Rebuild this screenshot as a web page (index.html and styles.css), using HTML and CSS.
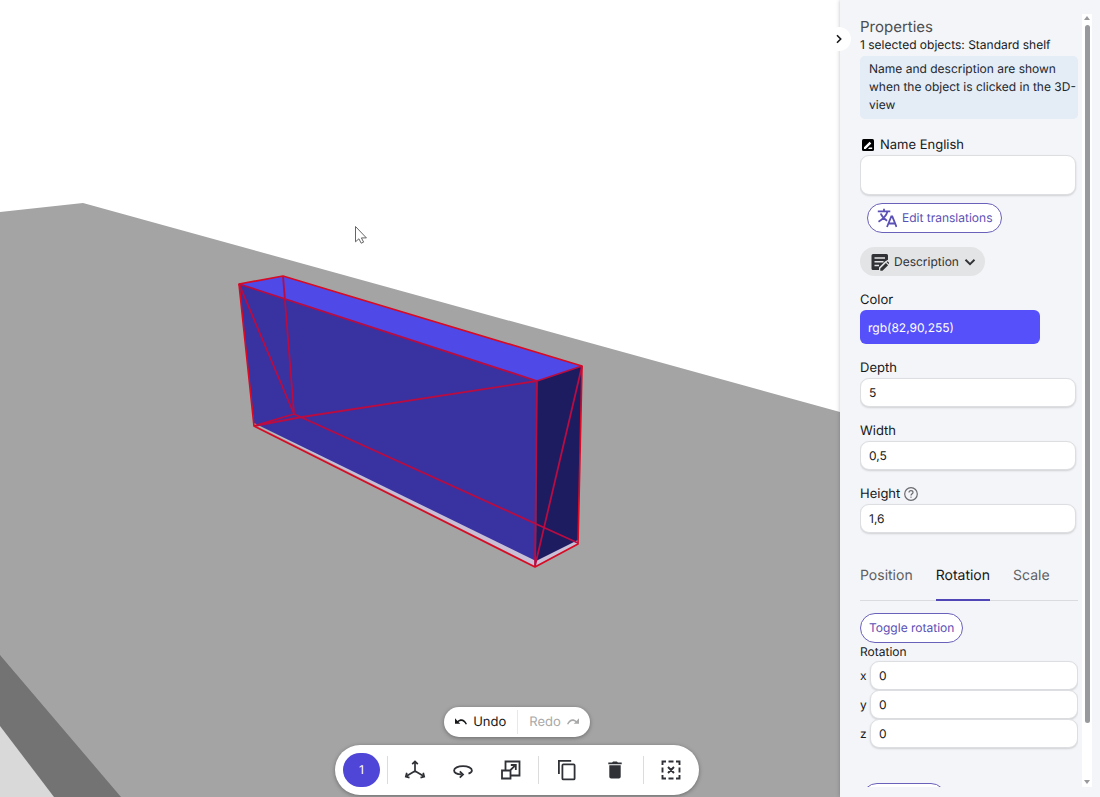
FILE: index.html
```html
<!DOCTYPE html>
<html lang="en">
<head>
<meta charset="utf-8">
<title>Shelf editor</title>
<meta name="viewport" content="width=device-width, initial-scale=1">
<link rel="stylesheet" href="styles.css">
</head>
<body>
<div class="app">
  <main class="viewport">
    <svg class="scene" viewBox="0 0 840 797" preserveAspectRatio="xMidYMid slice" role="img" aria-label="Selected shelf in the 3D view">
      <polygon fill="#d9d9d9" points="0,725 55,797 0,797"/>
      <polygon fill="#737373" points="0,654 122,797 54,797 0,726"/>
      <polygon fill="#a4a4a4" points="0,212 83,203 840,412 840,797 121,797 0,655"/>
      <polygon fill="#c9bfd6" points="254,424 535,566 579,543 579,536 535,556"/>
      <polygon fill="#3833a1" points="239,284 537,381 536,561 254,423"/>
      <polygon fill="#1d1c60" points="537,381 582,366 578,540 536,561"/>
      <polygon fill="#4f49e7" points="239,284 283,276 582,366 537,381"/>
      <g fill="none" stroke="#b80c42" stroke-width="1.800" stroke-linejoin="round">
        <path d="M283 276 294 414 578 543M254 426 294 414M239 284 294 414M254 426 302 417 537 381M582 366 535 566M239 284 537 381 582 366M537 381 535 567"/>
      </g>
      <g fill="none" stroke="#d80a24" stroke-width="1.700" stroke-linejoin="round">
        <path d="M239 284 283 276 582 366 578 544 535 567 254 426Z"/>
      </g>
      <path d="M355.500 226.500v15.300l3.400-3 2.300 4.400 2.400-1.100-2.200-4.200h5z" fill="#fff" stroke="#555" stroke-width=".9"/>
    </svg>

    <div class="dock">
      <div class="history">
        <button class="history-btn" type="button">
          <svg width="12" height="12" viewBox="0 0 12 12"><path d="M0 2.300v5.400h5.300L3.500 6C6 4 9 4.800 10.700 8.500l1.300-.6C10 3 5.800 1.900 2.500 4.900z" fill="currentColor"/></svg>
          Undo
        </button>
        <button class="history-btn" type="button" disabled>
          Redo
          <svg width="12" height="12" viewBox="0 0 12 12"><path d="M12 2.300v5.400H6.700L8.500 6C6 4 3 4.800 1.300 8.500L0 7.900C2 3 6.200 1.900 9.500 4.900z" fill="currentColor"/></svg>
        </button>
      </div>

      <div class="toolbar">
        <button class="count" type="button" aria-label="1 selected object">1</button>
        <div class="tools">
          <button class="tool" type="button" aria-label="Move"><svg width="22" height="22" viewBox="0 0 22 22" fill="none" stroke="currentColor" stroke-width="1.700"><path d="M11 3v9L3 16.800M11 12l8 4.800M8.200 5.200 11 2.400l2.800 2.800M5.500 18.600l-3.700-1 1-3.800M16.500 18.600l3.700-1-1-3.800"/></svg></button>
          <button class="tool" type="button" aria-label="Rotate"><svg width="22" height="22" viewBox="0 0 22 22" fill="none" stroke="currentColor" stroke-width="1.800"><path d="M16.500 14.600c2-.7 3.400-1.800 3.400-3.200 0-2.400-3.800-4.300-8.900-4.300s-8.900 1.900-8.900 4.300c0 2.200 3.100 3.700 7.600 4"/><path d="M7.800 12.400 11 15.500l-3.200 3.200"/></svg></button>
          <button class="tool" type="button" aria-label="Scale"><svg width="22" height="22" viewBox="0 0 22 22" fill="none" stroke="currentColor" stroke-width="1.800"><path d="M5.500 11V2.500h14V16.500H11M2 11.500h8.500v8H2zM9.500 12l6-5.800M10.800 6h5v5"/></svg></button>
        </div>
        <div class="tools middle">
          <button class="tool" type="button" aria-label="Duplicate"><svg width="22" height="22" viewBox="0 0 22 22" fill="none" stroke="currentColor" stroke-width="1.800"><path d="M2.900 15V1.900h12.300"/><rect x="6.400" y="5.400" width="12.200" height="15" rx="1"/></svg></button>
          <button class="tool" type="button" aria-label="Delete"><svg width="22" height="22" viewBox="0 0 22 22" fill="currentColor"><path d="M5.300 6.300h11.400v11.500a1.800 1.800 0 0 1-1.800 1.800H7.100a1.800 1.800 0 0 1-1.800-1.800zM4.300 3.400h3.800l1-1h3.800l1 1h3.800v1.800H4.300z"/></svg></button>
        </div>
        <div class="tools">
          <button class="tool" type="button" aria-label="Clear selection"><svg width="22" height="22" viewBox="0 0 22 22" fill="none" stroke="currentColor" stroke-width="1.900"><path d="M2.500 6V2.500H6M8.500 2.500h5M16 2.500h3.500V6M19.500 8.500v5M19.500 16v3.500H16M13.500 19.500h-5M6 19.500H2.500V16M2.500 13.500v-5M8 8l6 6M14 8l-6 6"/></svg></button>
        </div>
      </div>
    </div>
  </main>

  <aside class="panel">
    <button class="collapse" type="button" aria-label="Collapse panel"><svg width="10" height="10" viewBox="0 0 10 10"><path d="m3 1.300 3.700 3.700L3 8.700" fill="none" stroke="currentColor" stroke-width="1.600"/></svg></button>
    <div class="panel-scroll">
      <h1 class="title">Properties</h1>
      <p class="selected">1 selected objects: Standard shelf</p>
      <p class="info">Name and description are shown when the object is clicked in the 3D-<wbr>view</p>

      <div class="field name-field">
        <label class="label" for="name">
          <svg width="16" height="16" viewBox="0 0 16 16"><rect x="2" y="2" width="12" height="12" rx="1.500"/><path d="M4 12v-1.700L9.600 4.700l1.700 1.700L5.700 12zM12 4.600l-1.700-1.200M8 12h4.200v-1.400H9.400z" fill="#fff"/></svg>
          Name English
        </label>
        <input class="input tall" id="name" type="text">
      </div>
      <button class="outline translate" type="button">
        <svg width="20" height="20" viewBox="0 0 20 20" fill="none" stroke="currentColor" stroke-width="1.800"><path d="M.8 3.300h12.500M7 .8v2.500M10.500 3.500C9.400 7.600 6 11 1.500 13.800M3.700 5.500c1.300 3.200 3.500 5.600 6.400 7.200M10 19l4.300-10.500h1L19.500 19M11.500 15.500h6.500"/></svg>
        Edit translations
      </button>
      <button class="chip" type="button">
        <svg width="18" height="18" viewBox="0 0 18 18"><path d="M2 1h13.500a1.500 1.500 0 0 1 1.500 1.500v4.200L14 8.500 8 14.500V17H2a1.500 1.500 0 0 1-1.500-1.500v-13A1.500 1.500 0 0 1 2 1z" fill="currentColor"/><path d="M3.500 5h10.500M3.500 8.700h9M3.500 12.500h4.500" stroke="#e3e4e5" stroke-width="1.500"/><path d="M9.300 17.800v-2.200l5.600-5.600 2.200 2.200-5.600 5.600zM15.600 9.300l1-1 1.400 1.400v1.500z" fill="currentColor"/></svg>
        Description
        <svg width="12" height="12" viewBox="0 0 12 12"><path d="m1.500 3.800 4.500 4.400 4.500-4.400" fill="none" stroke="currentColor" stroke-width="1.900"/></svg>
      </button>

      <div class="field">
        <label class="label" for="color">Color</label>
        <input class="color-input" id="color" type="text" value="rgb(82,90,255)">
      </div>
      <div class="field">
        <label class="label" for="depth">Depth</label>
        <input class="input" id="depth" type="text" value="5">
      </div>
      <div class="field">
        <label class="label" for="width">Width</label>
        <input class="input" id="width" type="text" value="0,5">
      </div>
      <div class="field height-field">
        <label class="label" for="height">Height
          <svg width="14" height="14" viewBox="0 0 14 14" fill="none" stroke="#6b6b6f" stroke-width="1.200"><circle cx="7" cy="7" r="6.300"/><path d="M5 5.600c0-1.300.8-2 2-2s2 .8 2 1.800C9 6.800 7 6.800 7 8.600"/><circle cx="7" cy="10.200" r=".2"/></svg>
        </label>
        <input class="input" id="height" type="text" value="1,6">
      </div>

      <div class="tabs" role="tablist">
        <button class="tab" type="button" role="tab">Position</button>
        <button class="tab active" type="button" role="tab" aria-selected="true">Rotation</button>
        <button class="tab" type="button" role="tab">Scale</button>
      </div>
      <button class="outline" type="button">Toggle rotation</button>
      <fieldset class="axes">
        <legend class="legend">Rotation</legend>
        <div class="axis"><label for="rx">x</label><input class="input" id="rx" type="text" value="0"></div>
        <div class="axis"><label for="ry">y</label><input class="input" id="ry" type="text" value="0"></div>
        <div class="axis"><label for="rz">z</label><input class="input" id="rz" type="text" value="0"></div>
      </fieldset>
      <button class="outline more" type="button" aria-label="More"></button>
    </div>
    <div class="scrollbar" aria-hidden="true">
      <span class="arrow up"></span>
      <span class="track"><span class="thumb"></span></span>
      <span class="arrow down"></span>
    </div>
  </aside>
</div>
</body>
</html>
```
FILE: styles.css
```css
* {
  box-sizing: border-box;
}

body {
  margin: 0;
  color: #17181a;
  font-family: Inter, "Liberation Sans", sans-serif;
  font-size: 12px;
  line-height: 18px;
  text-rendering: geometricPrecision;
}

button,
input {
  font: inherit;
  color: inherit;
  text-rendering: inherit;
}

button {
  border: 0;
  padding: 0;
  background: none;
}

svg {
  flex: none;
}

.app {
  display: flex;
  height: 100vh;
  overflow: hidden;
}

/* 3D view */
.viewport {
  position: relative;
  flex: 1;
  min-width: 0;
  background: #fff;
}

.scene {
  display: block;
  width: 100%;
  height: 100%;
}

.dock {
  position: absolute;
  right: 0;
  bottom: 2px;
  left: 0;
  display: flex;
  flex-direction: column;
  align-items: center;
  gap: 8px;
  padding-left: 194px;
}

.history,
.toolbar {
  display: flex;
  align-items: center;
  background: #fff;
  box-shadow: 0 1px 4px rgba(0, 0, 0, 0.35);
}

.history {
  height: 30px;
  border-radius: 15px;
}

.history-btn {
  display: flex;
  align-items: center;
  gap: 6px;
  height: 24px;
  padding: 0 11px;
  font-size: 13px;
}

.history-btn + .history-btn {
  border-left: 1px solid #e8e8e8;
}

.history-btn:disabled {
  color: #a9a9a9;
}

.toolbar {
  height: 50px;
  padding: 0 8px;
  border-radius: 25px;
  color: #2f3136;
}

.count {
  width: 37px;
  height: 34px;
  margin-right: 7px;
  border-radius: 17px;
  background: #4f46d8;
  color: #fff;
}

.tools {
  display: flex;
  gap: 26px;
  height: 28px;
  padding: 0 16px;
  border-left: 1px solid #dcdcdc;
}

.tools.middle {
  padding: 0 17px;
}

.tools:last-child {
  padding-right: 9px;
}

.tool {
  display: flex;
  align-items: center;
}

/* Properties panel */
.panel {
  position: relative;
  display: flex;
  gap: 4px;
  width: 260px;
  padding: 14px 8px 10px 20px;
  background: #f3f5f8;
  box-shadow: 0 0 4px rgba(0, 0, 0, 0.25);
}

.collapse {
  position: absolute;
  top: 27px;
  left: -13px;
  display: grid;
  place-items: center;
  width: 24px;
  height: 24px;
  border-radius: 50%;
  background: #fff;
}

.panel-scroll {
  flex: 1;
  min-width: 0;
  overflow-x: hidden;
  overflow-y: auto;
  scrollbar-width: none;
}

.title {
  margin: 4px 0 0;
  color: #4c4d50;
  font-size: 15px;
  font-weight: 400;
  line-height: 18px;
}

.selected {
  margin: 0 0 2px;
}

.info {
  margin: 0 0 16px;
  padding: 4px 0 5px 9px;
  border-radius: 5px;
  background: #e4ecf6;
  color: #22272e;
}

.field {
  display: flex;
  flex-direction: column;
  margin: 0 2px 14px 0;
}

.label {
  display: flex;
  align-items: center;
  gap: 4px;
  height: 20px;
  font-size: 13px;
}

.input {
  width: 100%;
  min-width: 0;
  height: 29px;
  padding: 0 8px;
  border: 1px solid #dcdee1;
  border-radius: 9px;
  background: #fff;
  box-shadow: 0 1px 2px rgba(0, 0, 0, 0.15);
}

.input.tall {
  height: 40px;
}

.name-field {
  margin-bottom: 8px;
}

.outline {
  display: flex;
  align-items: center;
  gap: 5px;
  height: 30px;
  padding: 0 8px;
  border: 1px solid #6a61ba;
  border-radius: 15px;
  background: #fff;
  color: #5a50b5;
}

.translate {
  margin-left: 7px;
  padding: 0 9px;
}

.chip {
  display: flex;
  align-items: center;
  gap: 5px;
  height: 29px;
  margin: 14px 0;
  padding: 0 9px 0 11px;
  border-radius: 15px;
  background: #e3e4e5;
  color: #303236;
}

.color-input {
  width: 180px;
  height: 34px;
  padding: 0 8px;
  border: 0;
  border-radius: 6px;
  background: #5650fa;
  color: #fff;
}

.height-field {
  margin-bottom: 22px;
}

.tabs {
  display: flex;
  gap: 23px;
  margin-bottom: 12px;
  border-bottom: 1px solid #d9dbdf;
}

.tab {
  height: 46px;
  margin-bottom: -1px;
  padding-bottom: 3px;
  border-bottom: 2px solid transparent;
  color: #5d5e62;
  font-size: 14px;
}

.tab.active {
  border-color: #5046b5;
  color: #17181a;
}

.axes {
  min-width: 0;
  margin: 0 0 35px;
  padding: 0;
  border: 0;
}

.legend {
  padding: 0;
}

.axis {
  display: grid;
  grid-template-columns: 10px 1fr;
  align-items: center;
  height: 29px;
}

.more {
  width: 84px;
  margin-left: 2px;
}

.scrollbar {
  display: flex;
  flex-direction: column;
  align-items: center;
  width: 10px;
  background: #fff;
}

.track {
  flex: 1;
  width: 5px;
  margin: 5px 0;
}

.thumb {
  display: block;
  height: 93%;
  border-radius: 3px;
  background: #98999d;
}

.arrow {
  border: 3px solid transparent;
}

.up {
  border-top-width: 0;
  border-bottom: 4px solid #98999d;
  margin-top: 2px;
}

.down {
  border-top: 4px solid #98999d;
  border-bottom-width: 0;
  margin-bottom: 3px;
}
```
